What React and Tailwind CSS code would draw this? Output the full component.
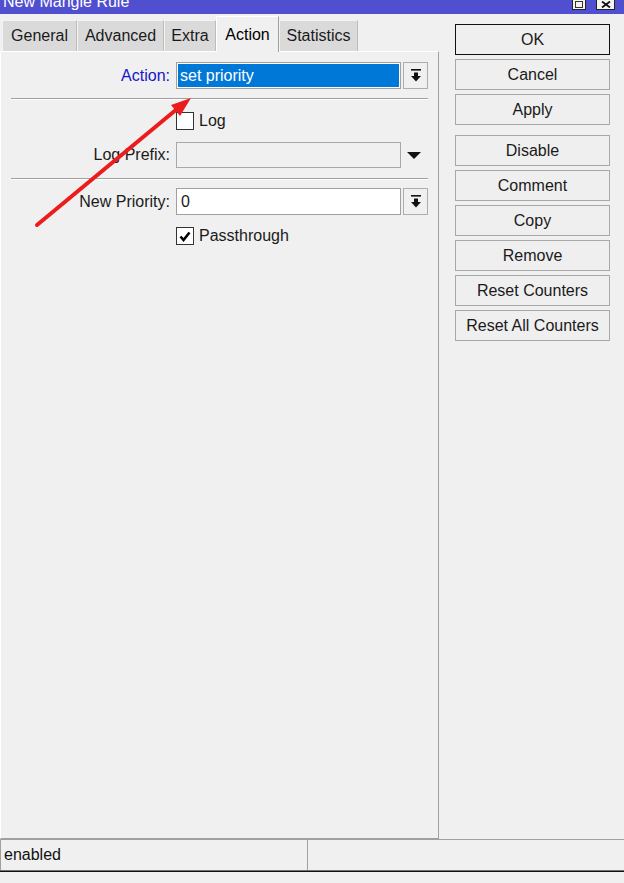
import { Fragment } from 'react';

const tabs = [
    { name: 'General', w: 'w-[75px]' },
    { name: 'Advanced', w: 'w-[87px]' },
    { name: 'Extra', w: 'w-[52px]' },
    { name: 'Action', w: 'w-[63px]', active: true },
    { name: 'Statistics', w: 'w-[79px]' },
];

// down arrow with a bar on top, used on the combo buttons
const DropIcon = () => (
    <svg width="10" height="13" viewBox="0 0 10 13">
        <rect x="0" y="0" width="10" height="1.6" fill="#111" />
        <rect x="3" y="3.5" width="4" height="4" fill="#111" />
        <polygon points="0,7 10,7 5,12.5" fill="#111" />
    </svg>
);

const DropButton = () => (
    <div className="ml-[2px] flex h-[27px] w-[25px] items-center justify-center border border-[#adadad] bg-[#f0f0f0]">
        <DropIcon />
    </div>
);

const Separator = ({ className }) => (
    <div className={`ml-[10px] h-[2px] w-[417px] border-t border-t-[#a0a0a0] border-b border-b-white ${className}`} />
);

const Checkbox = ({ checked }) => (
    <div className="flex h-[18px] w-[18px] items-center justify-center border border-[#333] bg-white">
        {checked && (
            <svg width="12" height="11" viewBox="0 0 12 11">
                <path d="M1.5 5.5 L4.5 9 L10.5 1.5" fill="none" stroke="#000" strokeWidth="2.6" />
            </svg>
        )}
    </div>
);

const SideButton = ({ children, primary }) => (
    <button
        className={`flex h-[31px] w-[155px] items-center justify-center bg-[#efefef] text-[16px] text-[#1a1a1a] ${primary ? 'border border-[#111]' : 'border border-[#a8a8a8]'}`}
    >
        {children}
    </button>
);

export default function App() {
    return (
        <div className="relative flex h-[883px] w-[624px] flex-col overflow-hidden bg-[#f0f0f0] font-['Liberation_Sans',Arial,sans-serif] text-[16px] text-[#1a1a1a]">
            {/* Title bar */}
            <div className="flex h-[14px] shrink-0 items-start justify-between overflow-hidden bg-[#4f4fcf] pl-[3px] pr-[9px]">
                <span className="-mt-[6px] leading-[16px] text-white">New Mangle Rule</span>
                <div className="flex items-start gap-[10px]">
                    <div className="-mt-[4px] flex h-[14px] w-[14px] items-center justify-center border border-[#222] bg-[#f4f4f4]">
                        <div className="mt-[2px] h-[7px] w-[8px] border border-[#333]" />
                    </div>
                    <div className="-mt-[4px] flex h-[14px] w-[19px] items-center justify-center border border-[#222] bg-[#f4f4f4]">
                        <svg className="mt-[2px]" width="10" height="7" viewBox="0 0 10 7">
                            <path d="M1 0.5 L9 6.5 M9 0.5 L1 6.5" stroke="#111" strokeWidth="1.8" />
                        </svg>
                    </div>
                </div>
            </div>

            <div className="flex flex-1">
                {/* Left side: tabs + action panel */}
                <div className="flex w-[439px] flex-col">
                    <div className="flex h-[37px] items-end pl-[2px]">
                        {tabs.map((t) => (
                            <div
                                key={t.name}
                                className={
                                    t.active
                                        ? `relative z-10 -mb-[1px] flex h-[36px] items-center justify-center border-t border-l border-t-white border-l-white border-r border-r-[#a0a0a0] bg-[#f0f0f0] text-black ${t.w}`
                                        : `flex h-[31px] items-center justify-center border-t border-l border-t-[#f4f4f4] border-l-[#f4f4f4] border-r border-r-[#bcbcbc] bg-[#dadada] ${t.w}`
                                }
                            >
                                {t.name}
                            </div>
                        ))}
                    </div>

                    <div className="flex-1 border-t border-l border-t-white border-l-white border-r border-b border-r-[#a0a0a0] border-b-[#a0a0a0] pt-[10px]">
                        {/* Action */}
                        <div className="flex h-[27px] items-center">
                            <span className="w-[169px] text-right text-[#1616c8]">Action:</span>
                            <div className="ml-[6px] flex h-[27px] w-[225px] border border-[#a0a0a0] bg-white p-[1px]">
                                <div className="flex flex-1 items-center bg-[#0078d7] pl-[2px] text-white">set priority</div>
                            </div>
                            <DropButton />
                        </div>

                        <Separator className="mt-[9px]" />

                        {/* Log */}
                        <div className="mt-[12px] flex h-[18px] items-center pl-[175px]">
                            <Checkbox />
                            <span className="ml-[5px]">Log</span>
                        </div>

                        {/* Log Prefix */}
                        <div className="mt-[12px] flex h-[26px] items-center">
                            <span className="w-[169px] text-right">Log Prefix:</span>
                            <div className="ml-[6px] h-[26px] w-[225px] border border-[#a8a8a8] bg-[#f0f0f0]" />
                            <svg className="ml-[6px]" width="14" height="7" viewBox="0 0 14 7">
                                <polygon points="0,0 14,0 7,7" fill="#111" />
                            </svg>
                        </div>

                        <Separator className="mt-[10px]" />

                        {/* New Priority */}
                        <div className="mt-[8px] flex h-[27px] items-center">
                            <span className="w-[169px] text-right">New Priority:</span>
                            <div className="ml-[6px] flex h-[27px] w-[225px] items-center border border-[#a0a0a0] bg-white pl-[4px]">0</div>
                            <DropButton />
                        </div>

                        {/* Passthrough */}
                        <div className="mt-[12px] flex h-[18px] items-center pl-[175px]">
                            <Checkbox checked />
                            <span className="ml-[5px]">Passthrough</span>
                        </div>
                    </div>
                </div>

                {/* Right side buttons */}
                <div className="flex flex-col pl-[16px] pt-[10px]">
                    <div className="flex flex-col gap-[4px]">
                        <SideButton primary>OK</SideButton>
                        <SideButton>Cancel</SideButton>
                        <SideButton>Apply</SideButton>
                    </div>
                    <div className="mt-[10px] flex flex-col gap-[4px]">
                        {['Disable', 'Comment', 'Copy', 'Remove', 'Reset Counters', 'Reset All Counters'].map((b) => (
                            <Fragment key={b}>
                                <SideButton>{b}</SideButton>
                            </Fragment>
                        ))}
                    </div>
                </div>
            </div>

            {/* Status bar */}
            <div className="flex h-[31px] shrink-0 border-t border-[#a0a0a0]">
                <div className="flex w-[308px] items-center border-l border-r border-[#a0a0a0] pl-[3px] text-[#111]">enabled</div>
                <div className="flex-1" />
            </div>
            <div className="h-[1px] shrink-0 bg-[#6e6e6e]" />
            <div className="h-[1px] shrink-0 bg-[#111]" />
            <div className="h-[11px] shrink-0 bg-[#f0f0f0]" />

            {/* red pointer arrow over the form */}
            <svg className="pointer-events-none absolute inset-0" width="624" height="883" viewBox="0 0 624 883">
                <line x1="37" y1="225" x2="177" y2="109" stroke="#ec1c1c" strokeWidth="4" strokeLinecap="round" />
                <polygon points="191,98 171,105 180,116" fill="#ec1c1c" />
            </svg>
        </div>
    );
}
